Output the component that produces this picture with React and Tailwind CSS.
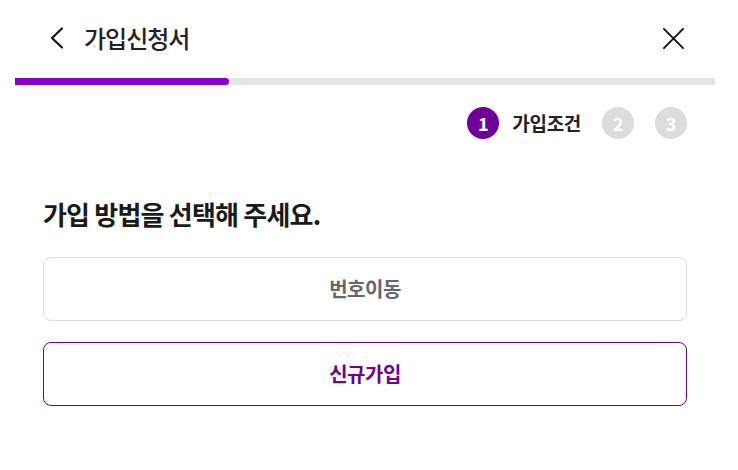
export default function App() {
  const font = { fontFamily: '"Noto Sans CJK KR", "Noto Sans", sans-serif' };
  return (
    <div className="w-[738px] h-[470px] bg-white" style={font}>
      <div className="w-[730px]">
        <header className="h-[76px] flex items-center justify-between pl-[46px] pr-[45px]">
          <div className="flex items-center gap-[14px]">
            <svg width="24" height="24" viewBox="0 0 24 24" fill="none" stroke="#111" strokeWidth="2.2" strokeLinecap="round" strokeLinejoin="round">
              <path d="M16 2.5 L6 12 L16 21.5" />
            </svg>
            <h1 className="text-[24px] font-medium text-[#222] tracking-[-1px] leading-none">가입신청서</h1>
          </div>
          <svg width="23" height="23" viewBox="0 0 24 24" fill="none" stroke="#111" strokeWidth="2" strokeLinecap="round">
            <path d="M2 2 L22 22 M22 2 L2 22" />
          </svg>
        </header>
        <div className="mt-[2px] mx-[15px] h-[7px] bg-[#e5e5e5]">
          <div className="h-full w-[214px] bg-[#8800d2] rounded-r-full" />
        </div>
        <div className="flex justify-end items-center pr-[43px] mt-[22px]">
          <div className="w-[32px] h-[32px] rounded-full bg-[#6e0099] text-white flex items-center justify-center text-[18px] font-bold">1</div>
          <span className="ml-[13px] text-[19px] font-bold text-[#222] tracking-[-0.3px]">가입조건</span>
          <div className="ml-[21px] w-[32px] h-[32px] rounded-full bg-[#dcdcdc] text-white flex items-center justify-center text-[18px] font-bold">2</div>
          <div className="ml-[21px] w-[32px] h-[32px] rounded-full bg-[#dcdcdc] text-white flex items-center justify-center text-[18px] font-bold">3</div>
        </div>
        <div className="px-[43px] mt-[58px]">
          <h2 className="text-[26px] font-bold text-[#1a1a1a] tracking-[-0.8px] leading-[34px]">가입 방법을 선택해 주세요.</h2>
          <button className="mt-[26px] w-full h-[64px] rounded-[8px] border border-[#dddddd] bg-white text-[20px] font-semibold text-[#666] tracking-[-0.5px] flex items-center justify-center">번호이동</button>
          <button className="mt-[21px] w-full h-[64px] rounded-[8px] border border-[#700095] bg-white text-[20px] font-bold text-[#700095] tracking-[-0.5px] flex items-center justify-center">신규가입</button>
        </div>
      </div>
    </div>
  );
}
